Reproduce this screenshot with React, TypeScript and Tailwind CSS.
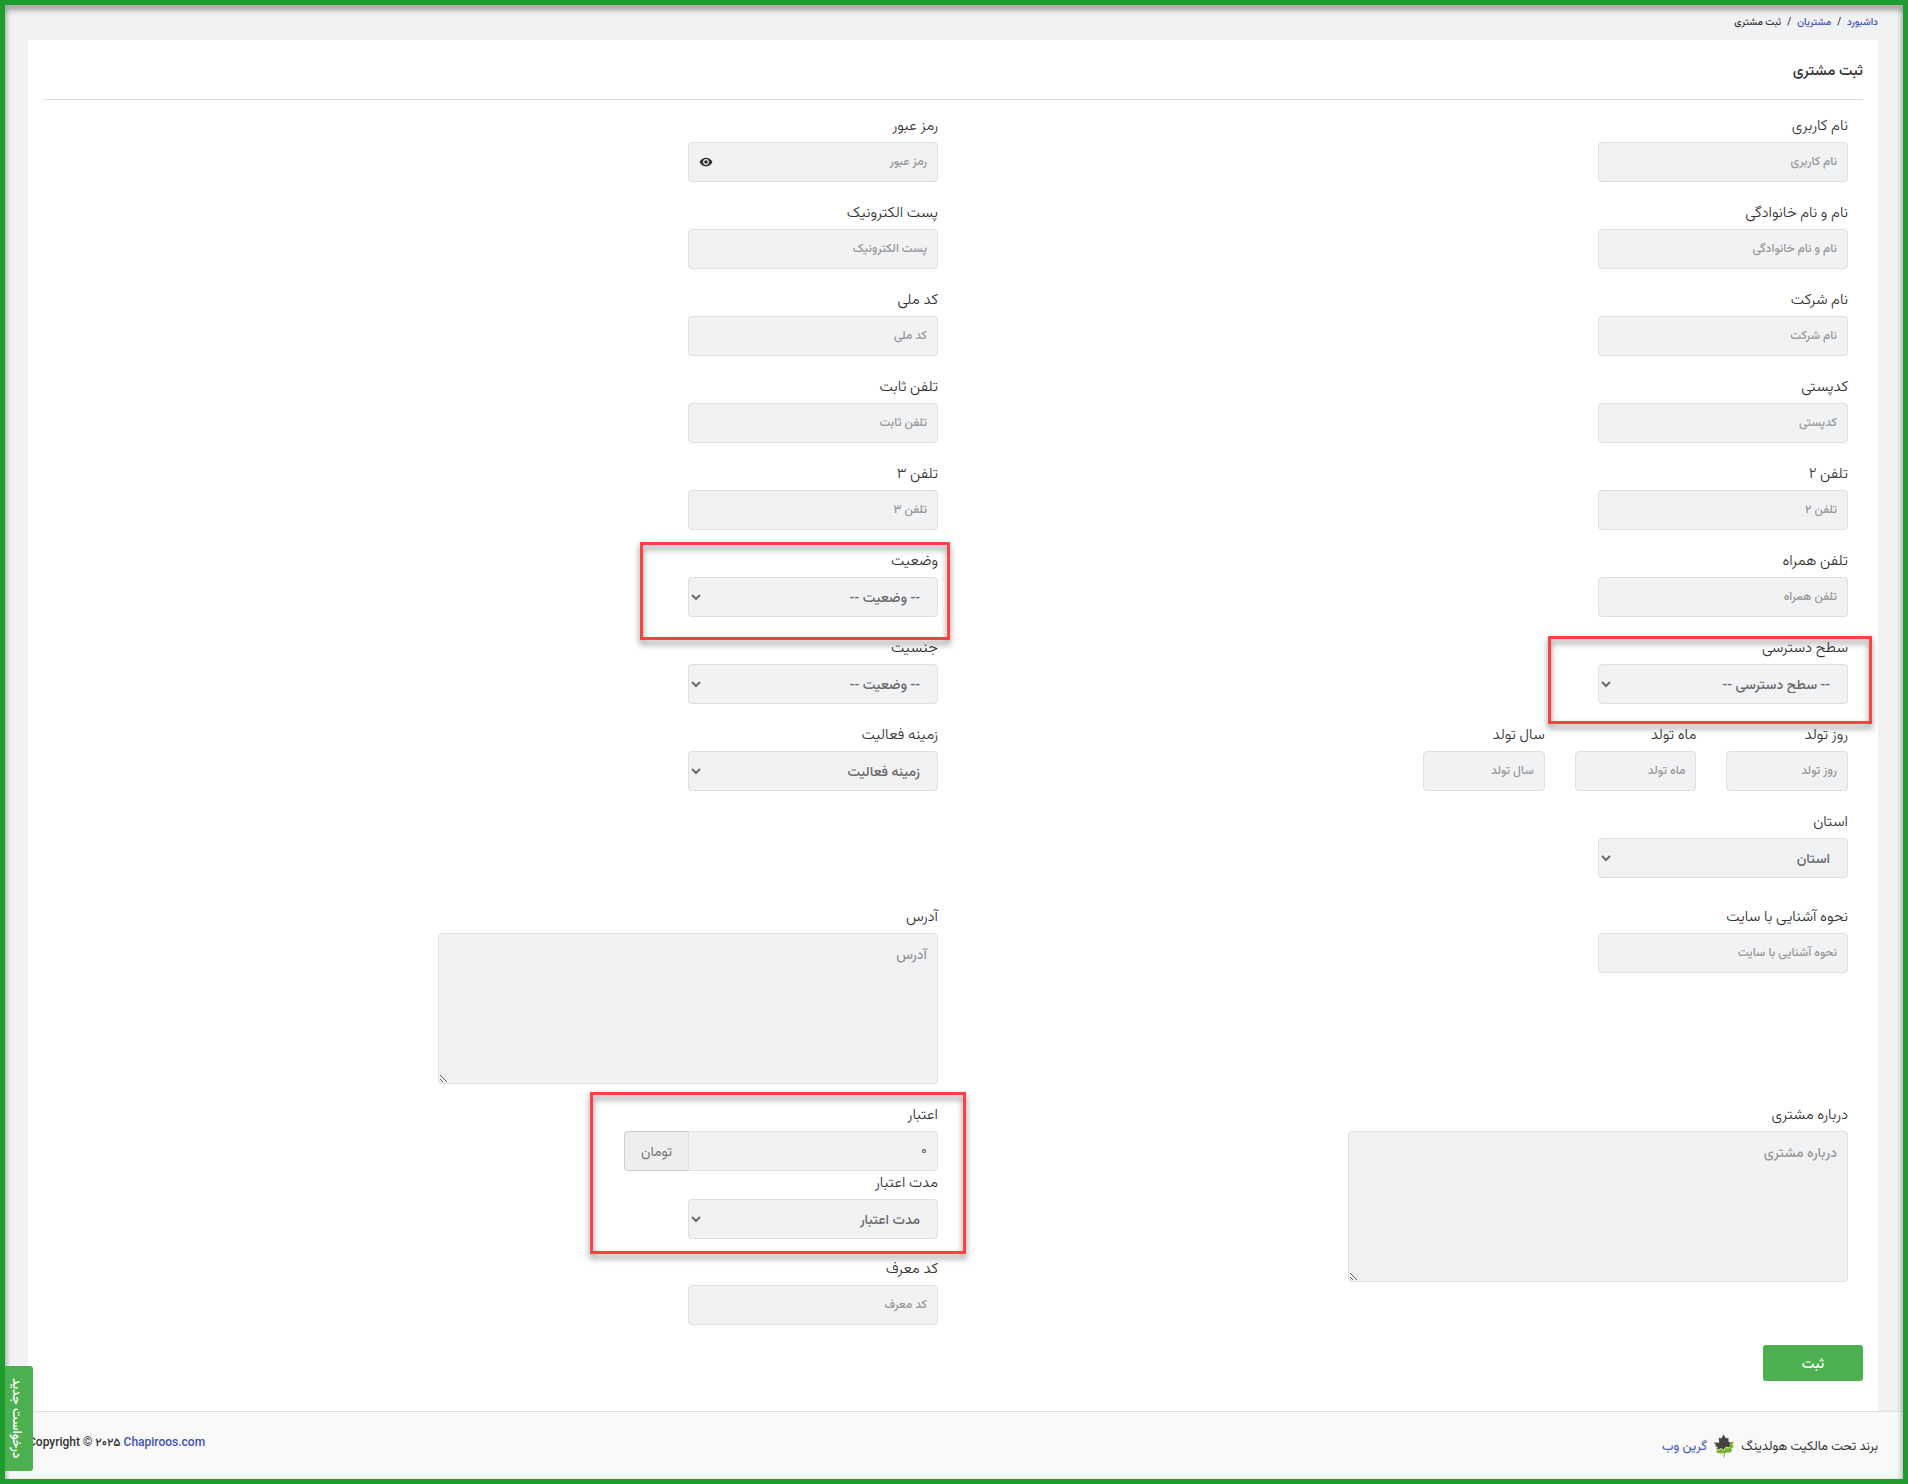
import { useState, type ReactNode } from "react";
import { MdVisibility } from "react-icons/md";

const controlClass =
  "block h-10 w-full rounded border border-[#dedfe0] bg-[#f1f2f4] text-[#5f6062] outline-none focus:border-[#4caf50]";

function Field({ id, label, children, className = "w-[250px]" }: { id: string; label: string; children: ReactNode; className?: string }) {
  return (
    <div className={`relative ${className}`}>
      <label htmlFor={id} className="mb-1 block h-6 text-[15px] leading-[22px] font-light whitespace-nowrap text-[#333]">
        {label}
      </label>
      {children}
    </div>
  );
}

function TextField({ id, label, className }: { id: string; label: string; className?: string }) {
  return (
    <Field id={id} label={label} className={className}>
      <input id={id} type="text" placeholder={label} className={`${controlClass} px-2.5 pb-0.5 text-[12px] font-medium placeholder:text-[#999]`} />
    </Field>
  );
}

function SelectField({ id, label, option, children }: { id: string; label: string; option: string; children?: ReactNode }) {
  return (
    <Field id={id} label={label}>
      <select id={id} className={`${controlClass} px-[13px] text-[14px] font-medium text-[#6b6b6b]`}>
        <option>{option}</option>
      </select>
      {children}
    </Field>
  );
}

function AreaField({ id, label }: { id: string; label: string }) {
  return (
    <Field id={id} label={label} className="w-[500px]">
      <textarea
        id={id}
        placeholder={label}
        className="block h-[151px] w-full rounded border border-[#dedfe0] bg-[#f1f2f4] px-2.5 py-2 text-[14px] leading-6 font-medium outline-none placeholder:text-[#999] focus:border-[#4caf50]"
      />
    </Field>
  );
}

function Highlight({ className }: { className: string }) {
  return (
    <div
      aria-hidden="true"
      className={`pointer-events-none absolute z-10 border-[3px] border-[#ff4040] drop-shadow-[0_4px_3px_rgba(0,0,0,0.5)] ${className}`}
    />
  );
}

function Row({ children, className = "mb-[19px]" }: { children: ReactNode; className?: string }) {
  return <div className={`grid grid-cols-2 *:px-[15px] ${className}`}>{children}</div>;
}

function PasswordField() {
  const [visible, setVisible] = useState(false);
  return (
    <Field id="password" label="رمز عبور">
      <div className="relative">
        <input
          id="password"
          type={visible ? "text" : "password"}
          placeholder="رمز عبور"
          className={`${controlClass} px-2.5 pb-0.5 text-[12px] font-medium placeholder:text-[#999]`}
        />
        <button
          type="button"
          aria-label="نمایش رمز عبور"
          onClick={() => setVisible(!visible)}
          className="absolute inset-y-0 left-[11px] flex items-center text-[#333]"
        >
          <MdVisibility size={14} />
        </button>
      </div>
    </Field>
  );
}

function LeafLogo() {
  return (
    <svg viewBox="0 0 22 24" className="h-6 w-[22px]" aria-hidden="true">
      <path
        d="M10.4 23.4 10.8 19 7.4 19.4 3 18.6 4.4 16.6 3 14.2 8 13 12 11 15.6 8.6 20.8 7.4 19.4 10.6 20.6 13 18.2 14.6 19.4 16.4 17.2 18.4 12 18.8 11.4 23.2Z"
        fill="#7ab22f"
      />
      <path
        d="M10.6 .6 13 4.6 15.4 3.8 15.6 8.2 17 8 16.4 13.2 12.6 12.6 10.4 15.8 8.4 14.2 4.6 15.4 4.2 12.6 2 12.4 3 10.8 .6 8.6 6.2 8.8 5.8 3.8 8.4 4.6Z"
        fill="#444"
      />
      <path d="M4.6 15.8 8.6 14.8 10.4 16.4 13 13.6 16.6 13.8" fill="none" stroke="#f9f9f9" strokeWidth=".7" />
    </svg>
  );
}

const pairs = [
  ["fullname", "نام و نام خانوادگی", "email", "پست الکترونیک"],
  ["company", "نام شرکت", "national-code", "کد ملی"],
  ["postal-code", "کدپستی", "phone", "تلفن ثابت"],
  ["phone2", "تلفن ۲", "phone3", "تلفن ۳"],
];

export default function App() {
  return (
    <div
      dir="rtl"
      className='relative flex min-h-screen flex-col bg-[#f1f2f4] p-[5px] font-["Roboto","Vazirmatn","Noto_Sans_Arabic","DejaVu_Sans",sans-serif] text-[#333]'
    >
      <div className="flex grow flex-col pr-[25px] pl-[23px]">
        <nav className="flex h-[35px] items-center gap-1.5 pb-0.5 text-[10px] font-medium">
          <a href="#dashboard" className="text-[#3f51b5]">داشبورد</a>
          <span>/</span>
          <a href="#customers" className="text-[#3f51b5]">مشتریان</a>
          <span>/</span>
          <span>ثبت مشتری</span>
        </nav>
        <main className="grow bg-white px-[15px] pb-[30px]">
          <h1 className="flex h-[59px] items-center pt-0.5 text-[15px] font-medium">ثبت مشتری</h1>
          <hr className="border-[#dedede]" />
          <form className="pt-3.5" onSubmit={(e) => e.preventDefault()}>
            <Row>
              <div><TextField id="username" label="نام کاربری" /></div>
              <div><PasswordField /></div>
            </Row>
            {pairs.map(([a, la, b, lb]) => (
              <Row key={a}>
                <div><TextField id={a} label={la} /></div>
                <div><TextField id={b} label={lb} /></div>
              </Row>
            ))}
            <Row>
              <div><TextField id="mobile" label="تلفن همراه" /></div>
              <div>
                <SelectField id="status" label="وضعیت" option="-- وضعیت --">
                  <Highlight className="-top-[7px] -right-3 -bottom-[23px] -left-12" />
                </SelectField>
              </div>
            </Row>
            <Row>
              <div>
                <SelectField id="access" label="سطح دسترسی" option="-- سطح دسترسی --">
                  <Highlight className="top-0 -right-6 -bottom-5 -left-[50px]" />
                </SelectField>
              </div>
              <div><SelectField id="gender" label="جنسیت" option="-- وضعیت --" /></div>
            </Row>
            <Row>
              <div className="grid grid-cols-6 gap-0 px-0! *:col-span-1 *:px-[15px]">
                <div><TextField id="birth-day" label="روز تولد" className="w-full" /></div>
                <div><TextField id="birth-month" label="ماه تولد" className="w-full" /></div>
                <div><TextField id="birth-year" label="سال تولد" className="w-full" /></div>
              </div>
              <div><SelectField id="activity" label="زمینه فعالیت" option="زمینه فعالیت" /></div>
            </Row>
            <Row className="mb-[27px]">
              <div><SelectField id="province" label="استان" option="استان" /></div>
            </Row>
            <Row>
              <div><TextField id="referral" label="نحوه آشنایی با سایت" /></div>
              <div><AreaField id="address" label="آدرس" /></div>
            </Row>
            <Row className="mb-5">
              <div><AreaField id="about" label="درباره مشتری" /></div>
              <div>
                <div className="relative mb-[18px] w-[314px]">
                  <Field id="credit" label="اعتبار" className="w-full">
                    <div className="flex">
                      <input
                        id="credit"
                        type="text"
                        defaultValue="۰"
                        className="h-10 w-[250px] rounded-r border border-[#dedfe0] bg-[#f1f2f4] px-2.5 text-[14px] text-[#5f6062] outline-none"
                      />
                      <span className="flex h-10 grow items-center justify-center rounded-l border border-r-0 border-[#ccc] bg-[#eee] text-[14px] text-[#777]">
                        تومان
                      </span>
                    </div>
                  </Field>
                  <SelectField id="credit-period" label="مدت اعتبار" option="مدت اعتبار" />
                  <Highlight className="-top-[11px] -right-7 -bottom-[15px] -left-[34px]" />
                </div>
                <TextField id="referrer-code" label="کد معرف" />
              </div>
            </Row>
            <button type="submit" className="block h-9 w-[100px] rounded-[3px] bg-[#4caf50] text-[14px] font-medium text-white">
              ثبت
            </button>
          </form>
        </main>
      </div>
      <footer className="flex h-[68px] items-center justify-between border-t border-[#dedfe0] bg-[#f9f9f9] pr-[25px] pl-[23px] text-[12px]">
        <div className="flex items-center gap-1.5 text-[13px]">
          <span>برند تحت مالکیت هولدینگ</span>
          <LeafLogo />
          <a href="#greenweb" className="text-[#3f51b5]">گرین وب</a>
        </div>
        <div dir="ltr" className="pb-2 font-medium">
          Copyright © ۲۰۲۵ <a href="#chapiroos" className="text-[#3f51b5]">Chapiroos.com</a>
        </div>
      </footer>
      <div
        aria-hidden="true"
        className="pointer-events-none absolute inset-0 z-20 border-[5px] border-[#1f9c2e] drop-shadow-[0_4px_3px_rgba(0,0,0,0.5)]"
      />
      <button
        type="button"
        className="absolute bottom-[13px] left-[5px] z-30 h-[105px] w-7 rounded-r-[3px] bg-[#4caf50] pr-1 text-[13px] font-medium whitespace-nowrap text-white [writing-mode:vertical-rl]"
      >
        درخواست جدید
      </button>
    </div>
  );
}
